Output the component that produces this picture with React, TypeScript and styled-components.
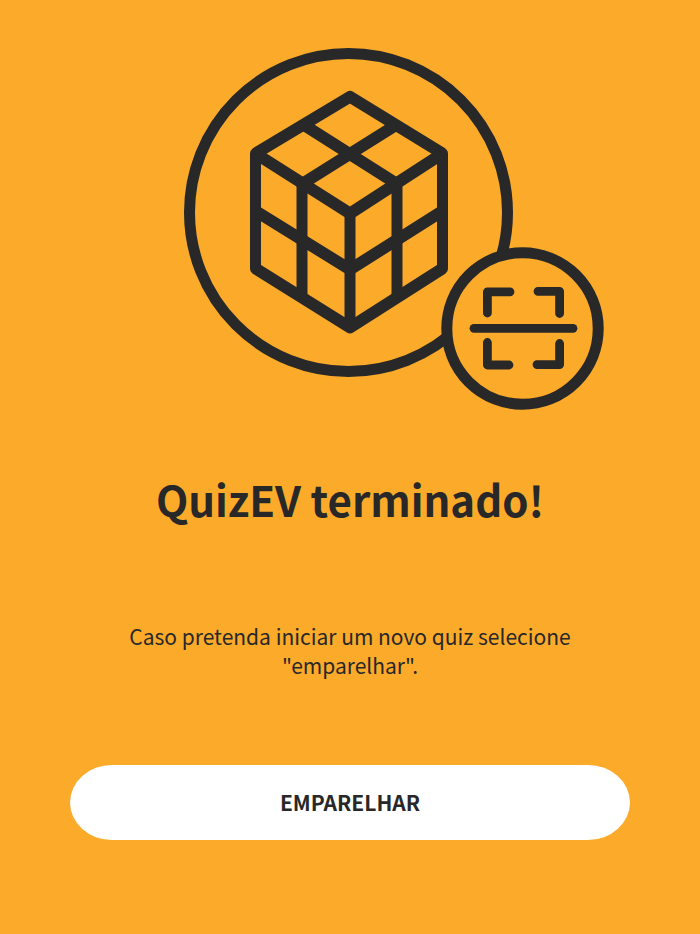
import React from "react";
import styled, { createGlobalStyle } from "styled-components";

const GlobalStyle = createGlobalStyle`
  body {
    margin: 0;
    background: #fcaa2a;
    color: #282828;
    font-family: "Noto Sans CJK SC", "Noto Sans", sans-serif;
  }
`;

const Screen = styled.main`
  box-sizing: border-box;
  min-height: 100vh;
  padding: 47px 10% 40px;
  display: flex;
  flex-direction: column;
  align-items: center;
  text-align: center;
`;

const Illustration = styled.svg`
  display: block;
  width: 75%;
  height: auto;
  align-self: flex-end;
  margin-right: 26px;
`;

const Title = styled.h1`
  margin: 56px 0 0;
  font-size: 42px;
  line-height: 64px;
  font-weight: 700;
`;

const Message = styled.p`
  margin: 91px 0 0;
  max-width: 480px;
  font-size: 21px;
  line-height: 29px;
`;

const PairButton = styled.button`
  width: 100%;
  margin-top: 85px;
  padding: 20px 24px;
  border: 0;
  border-radius: 42px / 50%;
  background: #ffffff;
  color: #282828;
  font: inherit;
  font-size: 21px;
  line-height: 35px;
  font-weight: 700;
  text-transform: uppercase;
  cursor: pointer;
`;

function CubeScanIcon() {
  return (
    <Illustration
      viewBox="184 47 420 364"
      fill="none"
      stroke="#282828"
      strokeLinecap="round"
      strokeLinejoin="round"
      aria-hidden="true"
    >
      <circle cx="348.5" cy="212.5" r="159" strokeWidth="11" />
      <g strokeWidth="11">
        <path d="M255.5 153.5V268.5M442.5 153.5V268.5" />
        <path d="M302 184V296M350 213V327M397 184V296" strokeLinecap="butt" />
      </g>
      <g strokeWidth="11.8" strokeLinecap="butt">
        <path d="M255.5 153.5 350 96.7 442.5 153.5" />
        <path d="M255.5 268.5 350 327.5 442.5 268.5" />
        <path d="M255.5 153.5 350 213.5 442.5 153.5" />
        <path d="M304 125 397 184M396 125 302 184" />
        <path d="M255.5 211 350 269.5 442.5 211" />
      </g>
      <circle cx="522.5" cy="328.5" r="75.7" fill="#fcaa2a" strokeWidth="11" />
      <g strokeWidth="8.8">
        <path d="M474 328.3H573" />
        <path d="M487.4 313V291.8H510M538 291.3H559.6V313.5M487.4 342.5V365H509M537 364.6H559.6V343.5" />
      </g>
    </Illustration>
  );
}

export default function App() {
  return (
    <>
      <GlobalStyle />
      <Screen>
        <CubeScanIcon />
        <Title>QuizEV terminado!</Title>
        <Message>Caso pretenda iniciar um novo quiz selecione "emparelhar".</Message>
        <PairButton type="button">Emparelhar</PairButton>
      </Screen>
    </>
  );
}
